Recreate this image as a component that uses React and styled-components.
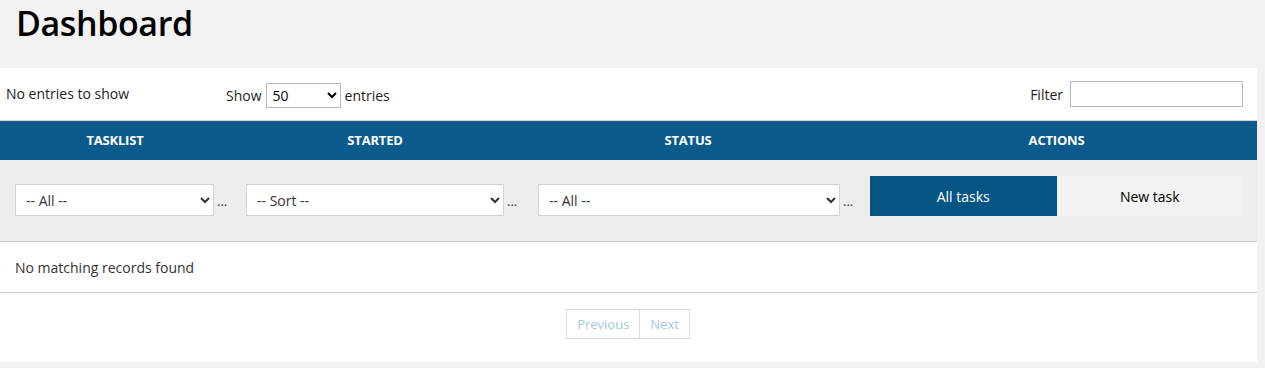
import React from "react";
import styled, { createGlobalStyle } from "styled-components";

const GlobalStyle = createGlobalStyle`
  html, body { margin: 0; padding: 0; background: #f2f2f2; }
  body { font-family: "Open Sans", "Noto Sans", sans-serif; color: #222; }
  * { box-sizing: border-box; }
`;

const Page = styled.div`
  width: 1265px;
  height: 368px;
  overflow: hidden;
`;

const Title = styled.h1`
  margin: 0;
  height: 68px;
  padding: 0 16px;
  font-size: 34px;
  font-weight: 600;
  line-height: 46px;
  color: #000;
  letter-spacing: -0.4px;
`;

const Panel = styled.div`
  background: #fff;
  margin-right: 8px;
  height: 294px;
`;

const TopBar = styled.div`
  height: 53px;
  display: grid;
  grid-template-columns: 220px 1fr auto;
  align-items: center;
  padding: 0 14px 0 6px;
  border-bottom: 1px solid #d6d6d6;
  font-size: 14px;
`;

const Info = styled.div`
  margin-top: -2px;
`;

const LengthControl = styled.label`
  display: flex;
  align-items: center;
  gap: 4px;
  margin-top: 2px;
`;

const SmallSelect = styled.select`
  width: 75px;
  height: 25px;
  border: 1px solid #b4b8c8;
  border-radius: 0;
  background: #fff;
  font-family: inherit;
  font-size: 14px;
  color: #000;
  padding: 0 2px;
`;

const FilterControl = styled.label`
  display: flex;
  align-items: center;
  gap: 7px;
`;

const FilterInput = styled.input`
  width: 173px;
  height: 26px;
  border: 1px solid #b4b8c8;
  border-radius: 0;
  padding: 0 4px;
`;

const Grid = styled.div`
  display: grid;
  grid-template-columns: 230px 290px 336px 1fr;
`;

const HeadRow = styled(Grid)`
  height: 39px;
  background: #0a5a8c;
  align-items: center;
  padding-bottom: 1px;
`;

const HeadCell = styled.div`
  text-align: center;
  color: #fff;
  font-size: 13px;
  font-weight: 700;
  text-transform: uppercase;
  letter-spacing: -0.2px;
`;

const FilterRow = styled(Grid)`
  height: 82px;
  background: #ededed;
  align-items: end;
  padding-bottom: 25px;
  border-bottom: 1px solid #cfcfcf;
`;

const FilterCell = styled.div`
  display: flex;
  align-items: flex-end;
  gap: 3px;
  padding: 0 3px 0 ${(p) => p.$left}px;
`;

const ColSelect = styled.select`
  flex: 1;
  min-width: 0;
  height: 32px;
  border: 1px solid #d4d4d4;
  border-radius: 0;
  background: #fff;
  font-family: inherit;
  font-size: 14px;
  color: #333;
  padding: 0 6px;
`;

const Dots = styled.span`
  font-size: 13px;
  line-height: 14px;
  color: #333;
  width: 10px;
  padding-bottom: 8px;
`;

const ActionCell = styled.div`
  display: flex;
  padding: 0 14px;
`;

const ActionButton = styled.button`
  flex: 1;
  height: 40px;
  border: none;
  border-radius: 0;
  font-family: inherit;
  font-size: 14px;
  background: ${(p) => (p.$active ? "#055685" : "#f2f2f2")};
  color: ${(p) => (p.$active ? "#fff" : "#000")};
`;

const EmptyRow = styled.div`
  height: 51px;
  padding: 0 15px;
  display: flex;
  align-items: center;
  font-size: 14px;
  color: #333;
  border-bottom: 1px solid #cfcfcf;
`;

const Pager = styled.div`
  display: flex;
  justify-content: center;
  padding-top: 16px;
`;

const PageButton = styled.span`
  display: inline-flex;
  align-items: center;
  height: 30px;
  padding: 0 10px;
  border: 1px solid #dddddd;
  margin-left: -1px;
  font-size: 13px;
  color: #a9c8e4;
`;

export default function App() {
  return (
    <Page>
      <GlobalStyle />
      <Title>Dashboard</Title>
      <Panel>
        <TopBar>
          <Info>No entries to show</Info>
          <LengthControl>
            Show
            <SmallSelect defaultValue="50">
              <option>10</option>
              <option>25</option>
              <option>50</option>
              <option>100</option>
            </SmallSelect>
            entries
          </LengthControl>
          <FilterControl>
            Filter
            <FilterInput type="text" />
          </FilterControl>
        </TopBar>
        <HeadRow>
          <HeadCell>Tasklist</HeadCell>
          <HeadCell>Started</HeadCell>
          <HeadCell>Status</HeadCell>
          <HeadCell>Actions</HeadCell>
        </HeadRow>
        <FilterRow>
          <FilterCell $left={15}>
            <ColSelect>
              <option>-- All --</option>
            </ColSelect>
            <Dots>...</Dots>
          </FilterCell>
          <FilterCell $left={16}>
            <ColSelect>
              <option>-- Sort --</option>
            </ColSelect>
            <Dots>...</Dots>
          </FilterCell>
          <FilterCell $left={18}>
            <ColSelect>
              <option>-- All --</option>
            </ColSelect>
            <Dots>...</Dots>
          </FilterCell>
          <ActionCell>
            <ActionButton $active>All tasks</ActionButton>
            <ActionButton>New task</ActionButton>
          </ActionCell>
        </FilterRow>
        <EmptyRow>No matching records found</EmptyRow>
        <Pager>
          <PageButton>Previous</PageButton>
          <PageButton>Next</PageButton>
        </Pager>
      </Panel>
    </Page>
  );
}
